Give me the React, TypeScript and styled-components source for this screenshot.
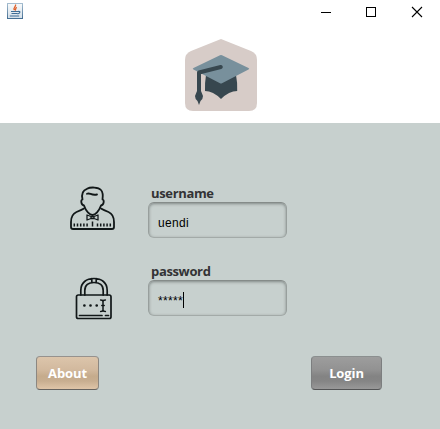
import React from 'react';
import styled, { createGlobalStyle } from 'styled-components';

const GlobalStyle = createGlobalStyle`
  * { box-sizing: border-box; }
  body { margin: 0; background: #fff; overflow: hidden; }
`;

const Window = styled.div`
  width: 440px;
  height: 429px;
  display: flex;
  flex-direction: column;
  background: #fff;
`;

const TitleBar = styled.header`
  height: 23px;
  flex: none;
  display: flex;
  justify-content: space-between;
  padding-left: 7px;
  svg { display: block; }
`;

const AppIcon = styled.svg`
  margin-top: 3px;
`;

const WindowControls = styled.div`
  display: flex;
`;

const ControlButton = styled.button`
  width: 46px;
  height: 23px;
  padding: 0;
  border: 0;
  background: none;
  display: grid;
  place-items: center;
`;

const Banner = styled.div`
  height: 100px;
  flex: none;
  padding: 16px 0 0 185px;
  svg { display: block; }
`;

const Panel = styled.form`
  flex: 1;
  background: #c7d0ce;
  padding-top: 63px;
`;

const FieldRow = styled.div`
  height: 78px;
  display: flex;
  padding-left: 68px;
`;

const IconSlot = styled.div<{ $left: number; $top: number }>`
  width: 80px;
  padding: ${(p) => p.$top}px 0 0 ${(p) => p.$left}px;
  svg { display: block; }
`;

const Field = styled.div`
  display: flex;
  flex-direction: column;
`;

const Label = styled.label`
  height: 16px;
  padding-left: 3px;
  font: bold 13px/15px 'Open Sans', 'Noto Sans', sans-serif;
  letter-spacing: -0.35px;
  color: #333335;
`;

const InputBox = styled.div`
  width: 139px;
  height: 36px;
  display: flex;
  align-items: center;
  padding: 4px 0 0 9px;
  border: 1px solid;
  border-color: #858b89 #989f9d #a3aaa8;
  border-radius: 6px;
  box-shadow: inset 0 1px 3px rgba(60, 66, 64, 0.5);
  font: 12px/19px 'Liberation Sans', Arial, sans-serif;
  color: #000;
`;

const InputValue = styled.span`
  height: 16px;
  letter-spacing: 0.3px;
`;

const Caret = styled.span`
  width: 1px;
  height: 16px;
  background: #000;
`;

const Actions = styled.div`
  display: flex;
  justify-content: space-between;
  padding: 14px 58px 0 36px;
`;

const ActionButton = styled.button<{ $tone: 'sand' | 'gray' }>`
  width: ${(p) => (p.$tone === 'sand' ? 63 : 71)}px;
  height: 34px;
  padding: 0 0 1px;
  border: 1px solid;
  border-color: ${(p) => (p.$tone === 'sand' ? '#96928e #8c8781 #66635f' : '#8b8f8f #7c7e7f #535455')};
  border-radius: 4px;
  background: ${(p) =>
    p.$tone === 'sand'
      ? 'linear-gradient(#dcc5ab 0%, #d2b99e 40%, #c5ab8c 60%, #c8ae90 75%, #dfc5a8 100%)'
      : 'linear-gradient(#9d9d9d 0%, #929292 40%, #838383 60%, #858585 75%, #999 100%)'};
  color: #fff;
  font: bold 13px/18px 'Open Sans', 'Noto Sans', sans-serif;
  letter-spacing: -0.1px;
`;

const JavaIcon = () => (
  <AppIcon width="16" height="16" viewBox="0 0 16 16" fill="none">
    <defs>
      <linearGradient id="tile" x2="0" y2="1">
        <stop stopColor="#a5bdd0" />
        <stop offset="1" stopColor="#456f94" />
      </linearGradient>
      <linearGradient id="tileFill" x2="0" y2="1">
        <stop stopColor="#f8fafb" />
        <stop offset="1" stopColor="#d5e0e9" />
      </linearGradient>
    </defs>
    <rect x=".5" y=".5" width="15" height="15" fill="url(#tileFill)" stroke="url(#tile)" />
    <path d="M8.500 1.500c1 2-3 3-1 5.500M9.800 4.400C7.500 5.500 9.600 6 8 7.500" stroke="#e0602a" strokeWidth="1.300" />
    <path d="M4 8.500h7M4.500 10.500h6M2.800 13h9.400M11 8.500c3-.6 2 2-.5 2.500" stroke="#3f6d95" strokeWidth="1.200" />
  </AppIcon>
);

const GraduationLogo = () => (
  <svg width="72" height="72" viewBox="0 0 72 72">
    <path d="M36 0 66 12q6 2.500 6 9v43q0 8-8 8H8q-8 0-8-8V21q0-6.500 6-9Z" fill="#d7ccc8" />
    <path d="M21 36h30q1.600 8 1.200 16Q44 52 36 60 28 52 20 52q-.2-9 1-16Z" fill="#37474f" />
    <path d="M35 16.200q1-.5 2 0L63.500 29q1.500.8 0 1.600L37 44.200q-1 .5-2 0L8.500 30.600q-1.500-.8 0-1.600Z" fill="#78909c" />
    <path d="M35.800 28 14 33.500V54" fill="none" stroke="#37474f" strokeWidth="4" strokeLinecap="round" strokeLinejoin="round" />
    <path d="m12 52-2 5q0 3 2.500 5l1.500 4 1.500-4q2.500-2 2.500-5l-2-5Z" fill="#37474f" />
  </svg>
);

const UserIcon = () => (
  <svg width="46" height="46" viewBox="0.500 0 46 46" fill="none" stroke="#111718" strokeWidth="1.800" strokeLinecap="round" strokeLinejoin="round">
    <path d="M13 13.500C11.500 6.500 14 4 17.500 2.800 21 .8 29 1 31.500 4c2.300 2.500 2 6 1.500 9.500 2 .5 1.500 5.500-1.500 6C29.500 25 25.800 29 23 29s-6.700-4-8.500-9.500c-3-.5-3.500-5.500-1.500-6Z" />
    <path d="M17.500 7.800c3-1.500 4 2 10 .7" />
    <path d="M14.500 22.500Q12 24 7 26 1.500 28.500 1.500 36v5q0 2 2 2h39q2 0 2-2v-5q0-7.500-5.500-10-5-2-7.500-3.500" />
    <path d="m17.500 29 4 1.500h3l4-1.500v5l-4-1.500h-3l-4 1.500ZM21.500 30.500v2M24.500 30.500v2" strokeWidth="1.300" />
    <path d="M4.800 37.500v3M8 37.500v3M11.200 37.500v3M14.400 37.500v3M17.600 37.500v3M23 35.500v5M28 37.500v3M31.200 37.500v3M34.400 37.500v3M37.600 37.500v3M40.800 37.500v3" strokeWidth="1.500" strokeLinecap="butt" />
  </svg>
);

const LockIcon = () => (
  <svg width="38" height="44" viewBox="0 0 38 44" fill="none" stroke="#111718" strokeWidth="1.700" strokeLinecap="round" strokeLinejoin="round">
    <rect x="1.500" y="18" width="34.500" height="23.500" rx="1.800" />
    <path d="M5.800 18v-4.500C5.800 5.500 11.500 1.500 19 1.500s13.200 4 13.200 12V18M9.800 18v-4.500C9.800 8 13.500 5.500 19 5.500s9.200 2.500 9.200 8V18M16.800 1.700v4M21.200 1.700v4M4.500 38.500h22.500M30.500 38.500h3" />
    <path d="M25.600 23q2.400 0 2.400 1.500Q28 23 30.400 23M28 24.500V33M25.600 34.500Q28 34.500 28 33q0 1.500 2.400 1.500M26.800 28.500h2.400" strokeWidth="1.500" />
    <path d="M9.400 28.500h.01M15.500 28.500h.01M21.700 28.500h.01" strokeWidth="2.700" />
  </svg>
);

export default function App() {
  return (
    <Window>
      <GlobalStyle />
      <TitleBar>
        <JavaIcon />
        <WindowControls>
          <ControlButton aria-label="Minimize">
            <svg width="12" height="12"><path d="M2 6.500h10" stroke="#000" /></svg>
          </ControlButton>
          <ControlButton aria-label="Maximize">
            <svg width="12" height="12"><rect x="1.500" y="1.500" width="9" height="9" fill="none" stroke="#000" /></svg>
          </ControlButton>
          <ControlButton aria-label="Close">
            <svg width="12" height="12"><path d="m1 1 10 10M11 1 1 11" stroke="#000" strokeWidth="1.100" /></svg>
          </ControlButton>
        </WindowControls>
      </TitleBar>
      <Banner><GraduationLogo /></Banner>
      <Panel>
        <FieldRow>
          <IconSlot $left={2} $top={0}><UserIcon /></IconSlot>
          <Field>
            <Label>username</Label>
            <InputBox><InputValue>uendi</InputValue></InputBox>
          </Field>
        </FieldRow>
        <FieldRow>
          <IconSlot $left={7} $top={13}><LockIcon /></IconSlot>
          <Field>
            <Label>password</Label>
            <InputBox><InputValue>*****</InputValue><Caret /></InputBox>
          </Field>
        </FieldRow>
        <Actions>
          <ActionButton type="button" $tone="sand">About</ActionButton>
          <ActionButton type="button" $tone="gray">Login</ActionButton>
        </Actions>
      </Panel>
    </Window>
  );
}
